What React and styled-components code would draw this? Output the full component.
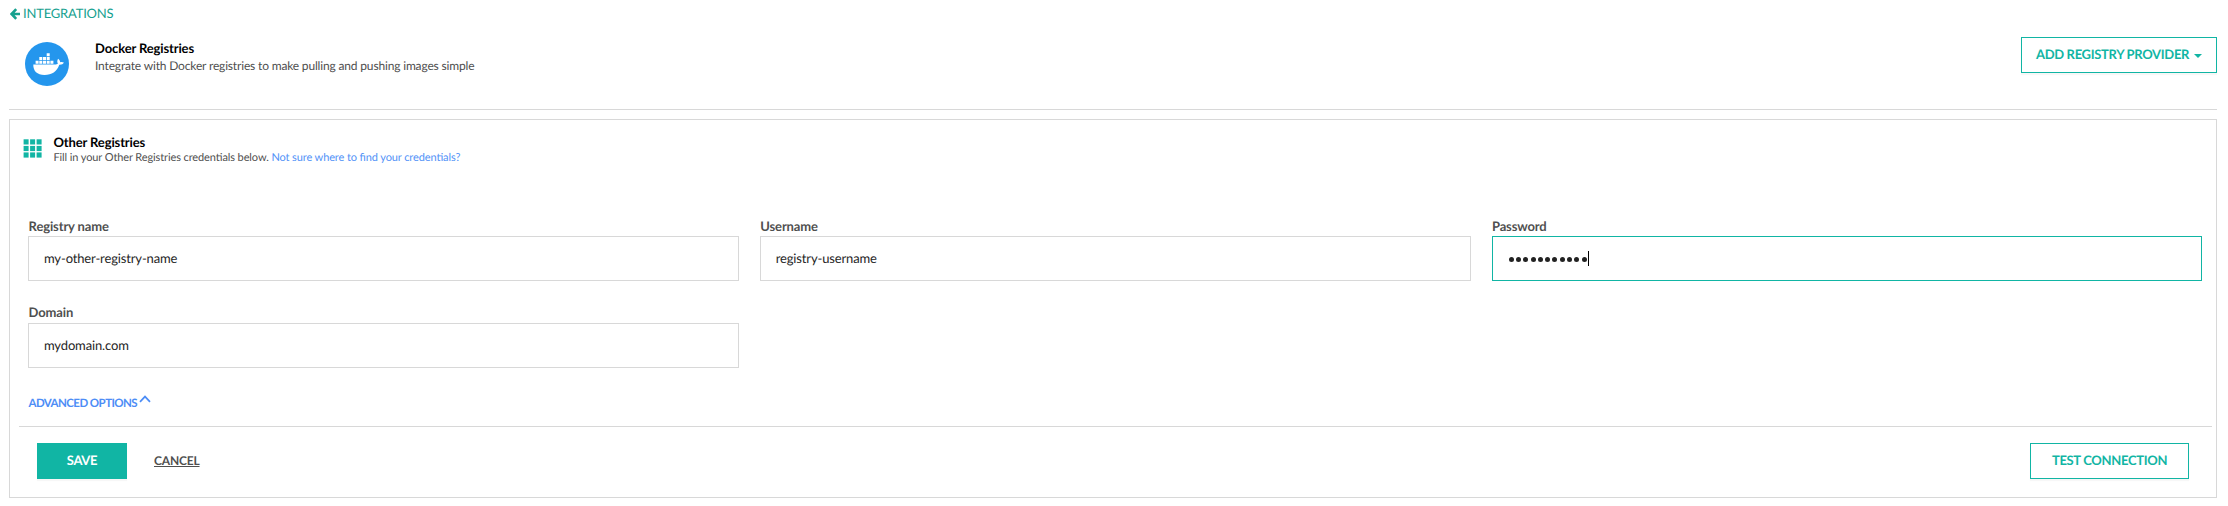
import React from 'react';
import styled, { createGlobalStyle, css } from 'styled-components';

const teal = '#11b5a4';
const line = '#d8d8d8';

const GlobalStyle = createGlobalStyle`
  *, *::before, *::after { box-sizing: border-box; }
  body {
    margin: 0;
    background: #fff;
    color: #4f4f4f;
    font-family: Lato, "Liberation Sans", sans-serif;
    font-size: 13px;
    font-feature-settings: "liga" 1;
    letter-spacing: -0.13px;
    text-rendering: geometricPrecision;
  }
`;

const Page = styled.div`
  height: 506px;
  padding: 5px 11px 0 9px;
`;

const BackLink = styled.a`
  display: flex;
  align-items: flex-start;
  gap: 3px;
  height: 18px;
  padding-left: 1px;
  color: #16a18f;
  font-size: 13px;
  letter-spacing: -0.2px;
  line-height: 17px;
  svg { display: block; margin-top: 3px; }
`;

const Header = styled.header`
  display: flex;
  align-items: flex-start;
  height: 87px;
  padding: 14px 0 0 16px;
  border-bottom: 1px solid ${line};
`;

const Logo = styled.svg`
  display: block;
  flex: none;
  width: 44px;
  height: 44px;
  margin: 5px 26px 0 0;
`;

const HeaderText = styled.div`
  flex: 1;
  padding-top: 3px;
`;

const Title = styled.h1`
  margin: 0;
  color: #000;
  font-size: 13px;
  font-weight: 700;
  line-height: ${p => p.$line || 16}px;
`;

const Description = styled.p`
  margin: 1px 0 0;
  font-size: ${p => (p.$small ? 11 : 12)}px;
  letter-spacing: ${p => (p.$small ? -0.11 : -0.165)}px;
  line-height: ${p => (p.$small ? 14 : 17)}px;
  a { color: #5292f7; }
`;

const Button = styled.button`
  display: flex;
  align-items: center;
  justify-content: center;
  gap: 5px;
  width: ${p => p.$width}px;
  height: 36px;
  padding: 0 0 2px;
  border: 1px solid ${teal};
  border-radius: 0;
  background: #fff;
  color: ${teal};
  font: 700 13px Lato, "Liberation Sans", sans-serif;
  letter-spacing: -0.32px;
  text-rendering: inherit;
  box-shadow: 0 2px 1px rgba(0, 0, 0, 0.03);
  ${p => p.$primary && css`
    background: ${teal};
    color: #fff;
  `}
`;

const Caret = styled.span`
  margin-top: 3px;
  border: 4px solid transparent;
  border-top: 4px solid currentColor;
  border-bottom: 0;
`;

const Card = styled.section`
  height: 379px;
  margin-top: 9px;
  padding: 15px 4px 0 9px;
  border: 1px solid ${line};
`;

const CardHeader = styled.div`
  display: flex;
  gap: 11.5px;
  height: 81px;
  padding: 0 0 0 4px;
`;

const GridIcon = styled.svg`
  display: block;
  width: 19px;
  height: 19px;
  margin-top: 4px;
`;

const Fields = styled.div`
  display: grid;
  grid-template-columns: repeat(3, 1fr);
  gap: 21px;
  padding: 0 9.7px 0 9.3px;
`;

const Field = styled.label`
  display: block;
  height: 66px;
`;

const Label = styled.span`
  display: block;
  height: 20px;
  padding-left: 0.3px;
  line-height: ${p => (p.$raised ? 18 : 20)}px;
  font-weight: 700;
`;

const InputBox = styled.div`
  display: flex;
  align-items: center;
  height: 45px;
  padding: 0 15px ${p => (p.$focused ? 0 : 1)}px 14.7px;
  border: 1px solid ${p => (p.$focused ? teal : line)};
  color: #262626;
  font-size: 13px;
  letter-spacing: -0.14px;
`;

const Dots = styled.span`
  display: flex;
  align-items: center;
  gap: 2.3px;
  height: 15px;
  padding: 1px 1px 0 1.3px;
  border-right: 1px solid #000;
  i {
    width: 5px;
    height: 5px;
    border-radius: 50%;
    background: #222;
  }
`;

const Advanced = styled.a`
  display: flex;
  height: 32px;
  margin-top: 25px;
  padding-left: 9.5px;
  color: #4d8df6;
  font-size: 11.5px;
  font-weight: 700;
  letter-spacing: -0.56px;
  line-height: 19px;
  svg { margin: 1px 0 0 1.5px; }
`;

const Footer = styled.footer`
  display: flex;
  align-items: center;
  height: 69px;
  padding: 0 23px 0 18px;
  border-top: 1px solid ${line};
`;

const Cancel = styled.a`
  flex: 1;
  margin-left: 27px;
  padding-bottom: 1px;
  font-size: 12px;
  font-weight: 700;
  letter-spacing: -0.18px;
  text-decoration: underline;
`;

function PasswordDots({ count }) {
  return <Dots>{Array.from({ length: count }, (_, i) => <i key={i} />)}</Dots>;
}

function TextField({ label, raised, focused, children }) {
  return (
    <Field>
      <Label $raised={raised}>{label}</Label>
      <InputBox $focused={focused}>{children}</InputBox>
    </Field>
  );
}

function DockerLogo() {
  return (
    <Logo viewBox="0 0 44 44">
      <circle cx="22" cy="22" r="22" fill="#2496ed" />
      <g fill="#fff">
        <path d="M21.7 11.3h3v2.9h-3zM14.3 15h3v2.9h-3zM18 15h3v2.9h-3zM21.7 15h3v2.9h-3zM10.6 18.8h3v2.9h-3zM14.3 18.8h3v2.9h-3zM18 18.8h3v2.9h-3zM21.7 18.8h3v2.9h-3zM25.4 18.8h3v2.9h-3z" />
        <path d="M8.3 22.6H29.8c1.4 0 2.4-.4 3.1-1-.9-1.5-.8-3.5.2-4.9 1.2.9 2 2.1 2.1 3.5 1.3-.3 2.7-.2 3.7.4-.8 1.6-2.3 2.3-4.6 2.2C31.8 29.7 27 33 19.5 33 12.1 33 8.1 29.1 8.3 22.6z" />
      </g>
    </Logo>
  );
}

export default function App() {
  return (
    <>
      <GlobalStyle />
      <Page>
        <BackLink>
          <svg width="10" height="12" viewBox="0 0 10 12" fill="none" stroke="currentColor" strokeWidth="2.6">
            <path d="M6.2 1.2 1.6 6l4.6 4.8M2 6h8.4" />
          </svg>
          INTEGRATIONS
        </BackLink>
        <Header>
          <DockerLogo />
          <HeaderText>
            <Title>Docker Registries</Title>
            <Description>Integrate with Docker registries to make pulling and pushing images simple</Description>
          </HeaderText>
          <Button $width={196}>ADD REGISTRY PROVIDER<Caret /></Button>
        </Header>
        <Card>
          <CardHeader>
            <GridIcon viewBox="0 0 19 19" fill={teal}>
              {[0.3, 6.9, 13.4].map(y => [0.6, 7.1, 13.6].map(x => (
                <rect key={`${x}-${y}`} x={x} y={y} width="5" height="5.2" />
              )))}
            </GridIcon>
            <div>
              <Title as="h2" $line={15}>Other Registries</Title>
              <Description $small>
                Fill in your Other Registries credentials below. <a>Not sure where to find your credentials?</a>
              </Description>
            </div>
          </CardHeader>
          <Fields>
            <TextField label="Registry name">my-other-registry-name</TextField>
            <TextField label="Username">registry-username</TextField>
            <TextField label="Password" focused><PasswordDots count={11} /></TextField>
            <TextField label="Domain" raised>mydomain.com</TextField>
          </Fields>
          <Advanced>
            ADVANCED OPTIONS
            <svg width="12" height="8" viewBox="0 0 12 8" fill="none" stroke="currentColor" strokeWidth="1.7">
              <path d="M1 6.8 6 1.6l5 5.2" />
            </svg>
          </Advanced>
          <Footer>
            <Button $primary $width={90}>SAVE</Button>
            <Cancel>CANCEL</Cancel>
            <Button $width={159}>TEST CONNECTION</Button>
          </Footer>
        </Card>
      </Page>
    </>
  );
}
